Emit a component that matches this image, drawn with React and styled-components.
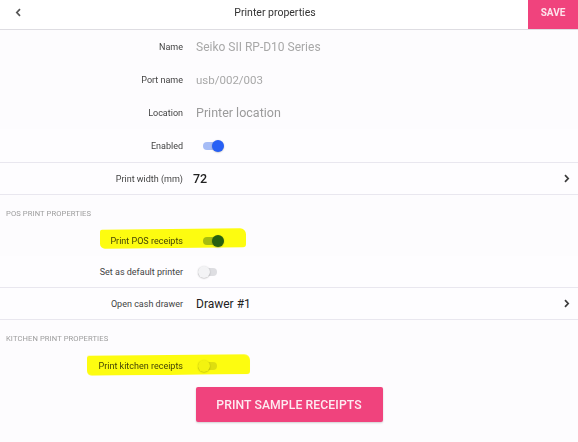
import React from "react";
import styled, { createGlobalStyle } from "styled-components";

const Global = createGlobalStyle`
  html, body { margin: 0; padding: 0; }
  body {
    background: #fdfcfe;
    font-family: Roboto, "Noto Sans", Arial, sans-serif;
    color: #333;
    -webkit-font-smoothing: antialiased;
  }
`;

const Page = styled.div`
  width: 578px;
  height: 442px;
  overflow: hidden;
  background: #fdfcfe;
`;

const Header = styled.header`
  display: flex;
  align-items: stretch;
  height: 29px;
  background: #fff;
  border-bottom: 1px solid #dedde2;
`;

const BackButton = styled.div`
  width: 22px;
  display: flex;
  align-items: center;
  justify-content: flex-end;
  padding-bottom: 5px;
  box-sizing: border-box;
`;

const Title = styled.div`
  flex: 1;
  display: flex;
  align-items: center;
  justify-content: center;
  font-size: 10.5px;
  color: #333;
  padding-bottom: 4px;
`;

const SaveButton = styled.div`
  width: 50px;
  background: #f0437d;
  color: #fde3ec;
  font-size: 10px;
  font-weight: 700;
  display: flex;
  align-items: center;
  justify-content: center;
  padding-bottom: 4px;
  box-sizing: border-box;
`;

const Row = styled.div`
  position: relative;
  display: grid;
  grid-template-columns: 183px 1fr auto;
  column-gap: ${(p) => p.$gap || 13}px;
  align-items: center;
  height: ${(p) => p.$h || 33}px;
  padding-right: 8px;
  background: ${(p) => (p.$list ? "#fefdff" : "transparent")};
  border-bottom: ${(p) => (p.$list ? "1px solid #e9e7ef" : "none")};

  ${(p) =>
    p.$hl
      ? `
    &::after {
      content: "";
      position: absolute;
      left: ${p.$hl.left}px;
      width: ${p.$hl.width}px;
      top: ${p.$hl.top}px;
      height: ${p.$hl.height}px;
      background: #ffff10;
      mix-blend-mode: multiply;
      border-radius: 2px 6px 3px 5px;
      transform: skewY(-0.6deg);
      pointer-events: none;
    }
  `
      : ""}
`;

const Label = styled.div`
  text-align: right;
  font-size: 9px;
  color: #434343;
  white-space: nowrap;
`;

const Value = styled.div`
  font-size: ${(p) => p.$size || 12}px;
  font-weight: ${(p) => p.$weight || 400};
  color: ${(p) => p.$color || "#a8a8a8"};
  white-space: nowrap;
`;

const SectionTitle = styled.div`
  padding: 14px 6px 6px;
  font-size: 7.6px;
  line-height: 10px;
  letter-spacing: 0.1px;
  color: #9c9c9c;
  text-transform: uppercase;
`;

const Track = styled.div`
  position: relative;
  width: ${(p) => (p.$on ? 21 : 20)}px;
  height: 12px;
  display: flex;
  align-items: center;
  justify-content: ${(p) => (p.$on ? "flex-end" : "flex-start")};
  margin-left: ${(p) => (p.$on ? 7 : 2)}px;

  &::before {
    content: "";
    position: absolute;
    left: 0;
    right: 1px;
    top: 2px;
    height: 8px;
    border-radius: 4px;
    background: ${(p) => (p.$on ? "#a6bcf6" : "#dedee2")};
  }
`;

const Knob = styled.div`
  position: relative;
  width: 12px;
  height: 12px;
  border-radius: 50%;
  background: ${(p) => (p.$on ? "#2760f5" : "#f3f3f5")};
  box-shadow: 0 0.5px 1.5px rgba(0, 0, 0, 0.3);
`;

const Toggle = ({ on }) => (
  <Track $on={on}>
    <Knob $on={on} />
  </Track>
);

const Chevron = ({ dir = "right" }) => (
  <svg width="7" height="9" viewBox="0 0 7 9" aria-hidden="true">
    <path
      d={dir === "right" ? "M2 1.2 L5.2 4.5 L2 7.8" : "M5 1.2 L1.8 4.5 L5 7.8"}
      fill="none"
      stroke={dir === "right" ? "#3c3c3c" : "#555"}
      strokeWidth="1.7"
    />
  </svg>
);

const ButtonWrap = styled.div`
  display: flex;
  justify-content: center;
  padding-top: 6px;
`;

const PrintButton = styled.button`
  width: 187px;
  height: 35px;
  border: none;
  border-radius: 2px;
  background: #f0437d;
  color: #fdebf1;
  font-family: Roboto, "Noto Sans", Arial, sans-serif;
  font-size: 12.2px;
  font-weight: 500;
  letter-spacing: 0.1px;
  text-transform: uppercase;
  box-shadow: 0 1px 2px rgba(0, 0, 0, 0.18);
`;

export default function App() {
  return (
    <Page>
      <Global />
      <Header>
        <BackButton>
          <Chevron dir="left" />
        </BackButton>
        <Title>Printer properties</Title>
        <SaveButton>SAVE</SaveButton>
      </Header>

      <Row>
        <Label>Name</Label>
        <Value>Seiko SII RP-D10 Series</Value>
      </Row>
      <Row>
        <Label>Port name</Label>
        <Value $size={11.5}>usb/002/003</Value>
      </Row>
      <Row>
        <Label>Location</Label>
        <Value $size={12.5} $color="#9b9b9b">Printer location</Value>
      </Row>
      <Row $list>
        <Label>Enabled</Label>
        <Toggle on />
      </Row>
      <Row $list $h={31} $gap={10}>
        <Label>Print width (mm)</Label>
        <Value $size={12.5} $weight={500} $color="#222">72</Value>
        <Chevron />
      </Row>

      <SectionTitle>POS print properties</SectionTitle>
      <Row $h={31} $hl={{ left: 100, width: 146, top: 4, height: 19 }}>
        <Label>Print POS receipts</Label>
        <Toggle on />
      </Row>
      <Row $list $h={31}>
        <Label>Set as default printer</Label>
        <Toggle />
      </Row>
      <Row $list $h={31}>
        <Label>Open cash drawer</Label>
        <Value $color="#222">Drawer #1</Value>
        <Chevron />
      </Row>

      <SectionTitle>Kitchen print properties</SectionTitle>
      <Row $h={31} $hl={{ left: 87, width: 163, top: 5, height: 20 }}>
        <Label>Print kitchen receipts</Label>
        <Toggle />
      </Row>

      <ButtonWrap>
        <PrintButton>Print sample receipts</PrintButton>
      </ButtonWrap>
    </Page>
  );
}
